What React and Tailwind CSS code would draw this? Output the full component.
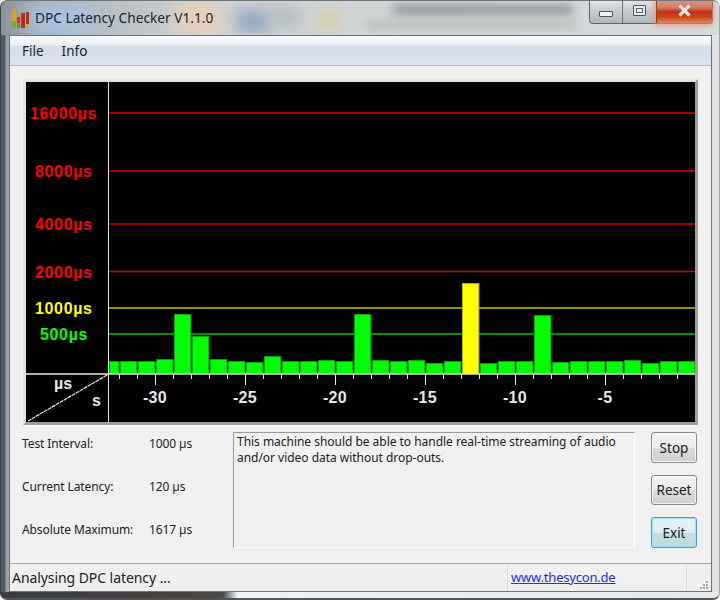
const bars = [
  [109, 10, 361], [120, 17, 361], [138, 17, 361], [156, 17, 359], [174, 17, 314], [192, 17, 336],
  [210, 17, 359], [228, 17, 361], [246, 17, 362], [264, 17, 356], [282, 17, 361], [300, 17, 361],
  [318, 17, 360], [336, 17, 361], [354, 17, 314], [372, 17, 360], [390, 17, 361], [408, 17, 360],
  [426, 17, 363], [444, 17, 361], [462, 17, 283], [480, 17, 363], [498, 17, 361], [516, 17, 361],
  [534, 17, 315], [552, 17, 362], [570, 17, 361], [588, 17, 361], [606, 17, 361], [624, 17, 360],
  [642, 17, 363], [660, 17, 361], [678, 17, 361],
];

const lines = [
  [113, "#d00000", "16000µs", "#ff0000", 30],
  [171, "#d00000", "8000µs", "#ff0000", 35],
  [224, "#d00000", "4000µs", "#ff0000", 35],
  [271.5, "#d00000", "2000µs", "#ff0000", 35],
  [308, "#c8c000", "1000µs", "#ffff00", 35],
  [334, "#00c000", "500µs", "#00ff00", 40],
];

const xLabels = [[155, "-30"], [245, "-25"], [335, "-20"], [425, "-15"], [515, "-10"], [605, "-5"]];

function Chart() {
  const ticks = [];
  for (let x = 119; x < 695; x += 18) ticks.push(x);
  return (
    <svg width="669" height="340" viewBox="26 82 669 340" className="block bg-black" style={{ fontFamily: '"Liberation Sans", Arial, sans-serif' }}>
      {lines.map(([y, c]) => (
        <line key={y} x1="108" x2="695" y1={y} y2={y} stroke={c} strokeWidth="1.6" />
      ))}
      {lines.map(([y, , t, c, x]) => (
        <text key={t} x={x} y={y + 6} fill={c} fontSize="16" fontWeight="700" letterSpacing="0.65">{t}</text>
      ))}
      {bars.map(([x, w, top], i) => (
        <rect key={i} x={x + 0.5} y={top + 0.5} width={w - 0.6} height={373 - top} fill={x === 462 ? "#ffff00" : "#00ff00"} stroke={x === 462 ? "#b8b000" : "#00a800"} strokeWidth="1" />
      ))}
      <line x1="108.5" x2="108.5" y1="82" y2="422" stroke="#e8e8e8" strokeWidth="1" />
      <line x1="26" x2="695" y1="374" y2="374" stroke="#e8e8e8" strokeWidth="1.3" />
      <line x1="28" x2="108" y1="421" y2="374.5" stroke="#e8e8e8" strokeWidth="1.2" strokeDasharray="4 0.6" />
      {ticks.map((x) => {
        const long = (x - 155) % 90 === 0;
        return <line key={x} x1={x + 0.5} x2={x + 0.5} y1="374" y2={long ? 385 : 379} stroke="#e8e8e8" strokeWidth="1" />;
      })}
      <text x="54" y="389" fill="#e8e8e8" fontSize="16" fontWeight="700">µs</text>
      <text x="92" y="406" fill="#e8e8e8" fontSize="16" fontWeight="700">s</text>
      {xLabels.map(([x, t]) => (
        <text key={t} x={x} y="403" fill="#e8e8e8" fontSize="16" fontWeight="700" letterSpacing="0.3" textAnchor="middle">{t}</text>
      ))}
    </svg>
  );
}

function AppIcon() {
  return (
    <svg width="18" height="19" viewBox="0 0 18 19" className="block">
      <rect x="0" y="0" width="4" height="19" fill="#e0a020" />
      <rect x="0" y="12" width="4" height="7" fill="#70b030" />
      <rect x="5" y="8" width="3" height="11" fill="#d03020" />
      <rect x="5" y="14" width="3" height="5" fill="#50a030" />
      <rect x="9" y="4" width="4" height="15" fill="#c82818" />
      <rect x="14" y="3" width="3" height="16" fill="#c82818" />
      <rect x="14" y="15" width="3" height="4" fill="#d0a020" />
    </svg>
  );
}

function Btn({ children, active }) {
  return (
    <div
      className={
        "flex h-[31px] w-[46px] items-center justify-center rounded-[3px] border pt-[1px] text-[13.5px] text-[#222] " +
        (active
          ? "border-[#3c9fd8] bg-[linear-gradient(#e4f2f8_0%,#dceef5_50%,#c4e0e4_52%,#bcdade_100%)] shadow-[inset_0_0_0_1px_#9fe0f5]"
          : "border-[#8a8a8a] bg-[linear-gradient(#f2f2f2_0%,#ebebeb_50%,#dcdcdc_52%,#cfcfcf_100%)] shadow-[inset_0_0_0_1px_#f4f4f4]")
      }
    >
      {children}
    </div>
  );
}

function Stat({ label, value }) {
  return (
    <div className="flex h-[14px] items-center tracking-[-0.1px]">
      <span className="w-[127px] text-[#222]">{label}</span>
      <span className="text-[#222]">{value}</span>
    </div>
  );
}

export default function App() {
  return (
    <div
      className="relative flex h-[600px] w-[720px] flex-col overflow-hidden rounded-[7px] border-x border-t border-b-[2px] border-l-[#3c4148] border-r-[#a0a4a8] border-t-[#70767c] border-b-[#50555a] bg-[linear-gradient(90deg,#4f5a66_0px,#4f5a66_4px,#98a0a8_5px,#a4acb4_20%,#dfe2e4_45%,#e2e3e4_100%)] text-[12px]"
      style={{ fontFamily: '"Noto Sans", "Open Sans", sans-serif' }}
    >
      {/* blurred desktop seen through the glass frame */}
      <div className="absolute left-0 top-0 h-[34px] w-full bg-[linear-gradient(90deg,#8d959c_0%,#b4bcc2_12%,#cfd3d4_30%,#d6d8d9_100%)]" />
      <div className="absolute left-[25px] top-[2px] h-[32px] w-[65px] bg-[#a9c3dc] blur-[9px]" />
      <div className="absolute left-[175px] top-[0px] h-[34px] w-[45px] bg-[#e8cfb8] blur-[9px]" />
      <div className="absolute left-[235px] top-[10px] h-[20px] w-[35px] bg-[#8aa4c0] blur-[8px]" />
      <div className="absolute left-[270px] top-[6px] h-[20px] w-[30px] bg-[#b4bdc2] blur-[7px]" />
      <div className="absolute left-[318px] top-[10px] h-[18px] w-[20px] bg-[#d6cc9c] blur-[7px]" />
      <div className="absolute left-[392px] top-[5px] h-[8px] w-[180px] bg-[#84888c] blur-[5px]" />
      <div className="absolute left-[365px] top-[21px] h-[6px] w-[210px] bg-[#b5b7b9] blur-[4px]" />

      <div className="relative flex h-[34px] shrink-0 items-start pl-[11px] pt-[8px]">
        <AppIcon />
        <span className="ml-[5px] -mt-[1px] text-[13.7px] leading-[20px] text-[#1a2530]">DPC Latency Checker V1.1.0</span>
        <div className="absolute right-[6px] top-[-1px] flex h-[24px] w-[124px] rounded-b-[4px] border border-t-0 border-[#5f666d] bg-[linear-gradient(#dfe3e6,#c6cbd0_50%,#b0b6bc)] shadow-[0_0_1px_#fff]">
          <div className="flex w-[33px] items-center justify-center border-r border-[#6a7076] pt-[4px]">
            <div className="h-[6px] w-[14px] rounded-[1px] border border-[#4a5258] bg-[#eef0f2]" />
          </div>
          <div className="flex w-[33px] items-center justify-center pb-[3px]">
            <div className="h-[11px] w-[13px] rounded-[1px] border border-[#4a5258] bg-[#e8eaec] p-[2px]">
              <div className="h-full w-full border border-[#5a6268]" />
            </div>
          </div>
          <div className="flex flex-1 items-center justify-center rounded-br-[4px] border-l border-[#9a3b28] bg-[linear-gradient(#d79a8a_0%,#d07a60_35%,#c4341a_50%,#c8401c_72%,#e08a5a_100%)] pb-[3px] shadow-[0_1px_5px_2px_#e88a70aa]">
            <svg width="15" height="13" viewBox="0 0 15 13">
              <path d="M2.5 1.5 L12.5 11.5 M12.5 1.5 L2.5 11.5" stroke="#5a2a20" strokeWidth="4.4" strokeOpacity="0.35" />
              <path d="M2.5 1.5 L12.5 11.5 M12.5 1.5 L2.5 11.5" stroke="#f4e6dc" strokeWidth="3.2" />
            </svg>
          </div>
        </div>
      </div>

      <div className="relative ml-[8px] mr-[7px] flex h-[557px] shrink-0 flex-col border border-[#6d747b] bg-[#f0f0f0]">
        <div className="flex h-[30px] shrink-0 items-center gap-[18px] border-b border-[#b6bdcb] bg-[linear-gradient(#f7f9fc_0%,#eaeff7_30%,#d5dcea_38%,#dce2f0_100%)] pl-[12px] pt-[1px] text-[13.5px] text-[#1c2430]">
          <span>File</span>
          <span>Info</span>
        </div>

        <div className="ml-[13px] mt-[13px] w-[675px] border-[3px] border-b-[#9e9e9e] border-l-[#e2e2e2] border-r-[#9e9e9e] border-t-[#e2e2e2]">
          <Chart />
        </div>

        <div className="mt-[7px] flex h-[116px] pl-[12px]">
          <div className="flex w-[211px] flex-col gap-[29px] pt-[5px]">
            <Stat label="Test Interval:" value="1000 µs" />
            <Stat label="Current Latency:" value="120 µs" />
            <Stat label="Absolute Maximum:" value="1617 µs" />
          </div>
          <div className="h-[116px] w-[402px] border border-b-white border-l-[#9a9a9a] border-r-white border-t-[#9a9a9a] px-[3px] pt-[1px] leading-[16px] tracking-[-0.03px] text-[#222]">
            This machine should be able to handle real-time streaming of audio and/or video data without drop-outs.
          </div>
          <div className="ml-[16px] flex flex-col gap-[12px]">
            <Btn>Stop</Btn>
            <Btn>Reset</Btn>
            <Btn active>Exit</Btn>
          </div>
        </div>

        <div className="mt-auto flex h-[28px] border-t border-[#a5a5a5] bg-[#f1eeee] text-[14px] text-[#222]">
          <div className="w-[497px] pl-[2px] pt-[3px] tracking-[-0.07px]">Analysing DPC latency ...</div>
          <div className="w-[180px] border-x border-[#dcdcdc] bg-[#f0f0f0] pl-[3px] pt-[4px] text-[13px] tracking-[-0.2px] text-[#2a2aee] underline">www.thesycon.de</div>
          <div className="relative flex-1">
            <svg width="10" height="10" viewBox="0 0 10 10" className="absolute bottom-[1px] right-[2px]">
              <g fill="#a8a8a8">
                <rect x="7" y="1" width="2" height="2" />
                <rect x="4" y="4" width="2" height="2" />
                <rect x="7" y="4" width="2" height="2" />
                <rect x="1" y="7" width="2" height="2" />
                <rect x="4" y="7" width="2" height="2" />
                <rect x="7" y="7" width="2" height="2" />
              </g>
            </svg>
          </div>
        </div>
      </div>

      <div className="-ml-[1px] -mr-[1px] flex-1 bg-[linear-gradient(90deg,#3c3c3e_0%,#4a4644_30%,#4a4c50_31%,#f2f2f2_33%,#e8e8e8_100%)]" />
    </div>
  );
}
